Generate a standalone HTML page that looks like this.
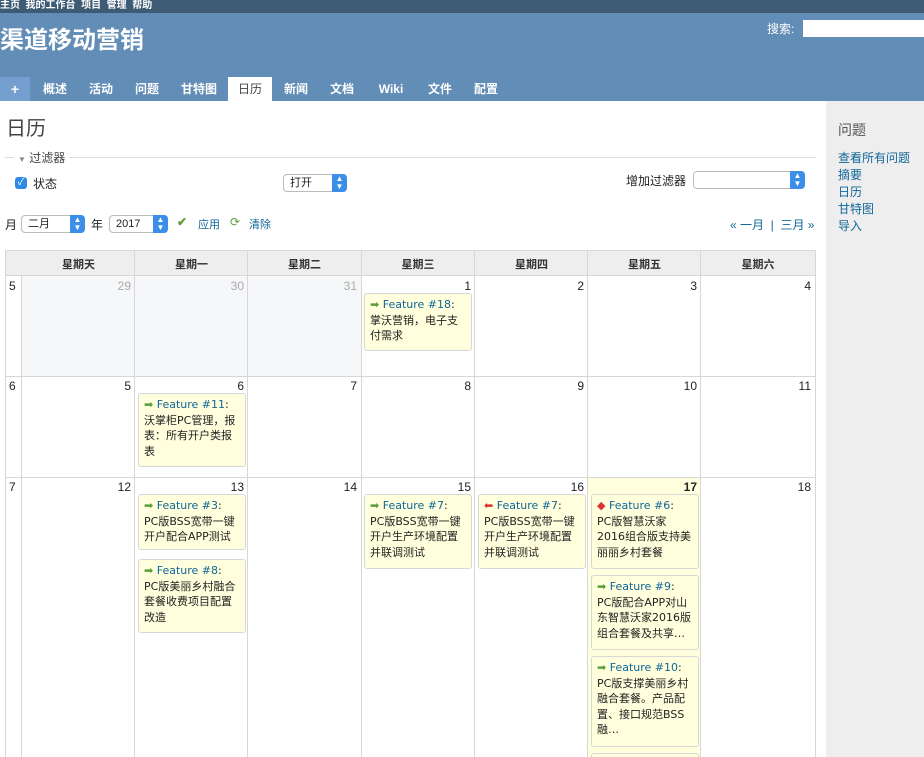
<!DOCTYPE html>
<html style="overflow:hidden;width:924px;height:757px"><head><meta charset="utf-8"><style>
*{margin:0;padding:0;box-sizing:border-box}
body{width:924px;height:757px;overflow:hidden;font-family:"Liberation Sans","Noto Sans CJK SC",sans-serif;font-size:12px;color:#222;background:#fff;position:relative}
.a{position:absolute}
#top{left:0;top:0;width:924px;height:13px;background:#3e5b76;color:#fff;font-size:10px;font-weight:bold;line-height:11px}
#hd{left:0;top:13px;width:924px;height:88px;background:#628db6}
.tab{top:77px;height:24px;line-height:24px;color:#fff;font-weight:bold;font-size:12px;text-align:center}
#side{left:826px;top:101px;width:98px;height:656px;background:#eeeeee}
.side a{display:block;color:#169;font-size:12px;line-height:17px;text-decoration:none}
.sel{height:18px;border:1px solid #bbb;border-radius:4px;background:#fff;font-size:11px;line-height:16px;padding-left:6px}
.sel i{position:absolute;right:-1px;top:-1px;width:15px;height:18px;background:#3b8fe8;border-radius:0 4px 4px 0;color:#fff;font-style:normal;font-size:8px;line-height:8px;text-align:center;padding-top:1px}
.dn{font-size:12px;text-align:right;padding-right:4px;line-height:18px}
.iss{background:#ffffdd;border:1px solid #d7d7d7;border-radius:3px;font-family:"DejaVu Sans","Noto Sans CJK SC",sans-serif;font-size:11px;line-height:15.5px;padding:3px 5px;width:108px;color:#222;overflow:hidden}
.iss b{font-weight:normal;color:#169}
.g{color:#5a9e3c}.r{color:#d33}
.wk{font-size:12px;left:9px}
</style></head><body>
<div id="top" class="a"><span>主页&nbsp; 我的工作台&nbsp; 项目&nbsp; 管理&nbsp; 帮助</span></div>
<div id="hd" class="a"></div>
<div class="a" style="left:0;top:20px;color:#fff;font-size:24px;font-weight:bold">渠道移动营销</div>
<div class="a" style="left:767px;top:20px;color:#fff;font-size:12px">搜索:</div>
<div class="a" style="left:803px;top:20px;width:121px;height:17px;background:#fff"></div>
<div class="a tab" style="left:0;width:30px;background:#759fcf;font-size:14px">+</div>
<div class="a tab" style="left:34px;width:42px">概述</div>
<div class="a tab" style="left:80px;width:42px">活动</div>
<div class="a tab" style="left:126px;width:42px">问题</div>
<div class="a tab" style="left:172px;width:54px">甘特图</div>
<div class="a tab" style="left:228px;width:44px;background:#fff;color:#444;font-weight:normal">日历</div>
<div class="a tab" style="left:275px;width:42px">新闻</div>
<div class="a tab" style="left:321px;width:42px">文档</div>
<div class="a tab" style="left:368px;width:46px">Wiki</div>
<div class="a tab" style="left:419px;width:42px">文件</div>
<div class="a tab" style="left:465px;width:42px">配置</div>
<div id="side" class="a"></div>
<div class="a" style="left:838px;top:120px;font-size:14px;color:#555">问题</div>
<div class="a side" style="left:838px;top:150px"><a>查看所有问题</a><a>摘要</a><a>日历</a><a>甘特图</a><a>导入</a></div>
<div class="a" style="left:6px;top:112px;font-size:20px;color:#444">日历</div>
<div class="a" style="left:5px;top:157px;width:811px;border-top:1px solid #ddd"></div>
<div class="a" style="left:14px;top:149px;background:#fff;padding:0 4px;font-size:12px;color:#444"><span style="font-size:8px;color:#888">▼</span> 过滤器</div>
<div class="a" style="left:15px;top:177px;width:12px;height:12px;background:#2d8ae6;border-radius:3px;color:#fff;font-size:10px;line-height:12px;text-align:center">✓</div>
<div class="a" style="left:33px;top:175px">状态</div>
<div class="a sel" style="left:283px;top:174px;width:64px">打开<i>▲<br>▼</i></div>
<div class="a" style="left:626px;top:172px">增加过滤器</div>
<div class="a sel" style="left:693px;top:171px;width:112px"><i>▲<br>▼</i></div>
<div class="a" style="left:5px;top:216px">月</div>
<div class="a sel" style="left:21px;top:215px;width:64px">二月<i>▲<br>▼</i></div>
<div class="a" style="left:91px;top:216px">年</div>
<div class="a sel" style="left:109px;top:215px;width:59px">2017<i>▲<br>▼</i></div>
<div class="a" style="left:177px;top:215px;color:#5a9e3c;font-weight:bold">✔</div>
<div class="a" style="left:198px;top:216px;color:#169;font-size:11px">应用</div>
<div class="a" style="left:230px;top:215px;color:#5a9e3c">⟳</div>
<div class="a" style="left:249px;top:216px;color:#169;font-size:11px">清除</div>
<div class="a" style="left:730px;top:216px;color:#169;font-size:12px">« 一月 &nbsp;|&nbsp; 三月 »</div>

<div class="a" style="left:5px;top:250px;width:811px;height:507px;border-left:1px solid #d7d7d7;border-top:1px solid #d7d7d7"></div>
<div class="a" style="left:6px;top:251px;width:809px;height:25px;background:#eee;border-bottom:1px solid #d7d7d7"></div>
<div class="a" style="left:22px;top:256px;width:793px;font-weight:bold;font-size:11px;display:flex;color:#333">
<div style="width:113px;text-align:center">星期天</div><div style="width:113px;text-align:center">星期一</div><div style="width:113px;text-align:center">星期二</div><div style="width:114px;text-align:center">星期三</div><div style="width:113px;text-align:center">星期四</div><div style="width:113px;text-align:center">星期五</div><div style="width:114px;text-align:center">星期六</div></div>
<div class="a wk" style="top:279px">5</div><div class="a wk" style="top:379px">6</div><div class="a wk" style="top:480px">7</div>
<div class="a" style="left:22px;top:276px;width:339px;height:100px;background:#f6f7f9"></div>
<div class="a" style="left:588px;top:477px;width:113px;height:280px;background:#ffffdd"></div>
<div class="a" style="left:21px;top:276px;height:481px;border-left:1px solid #d7d7d7"></div>
<div class="a" style="left:134px;top:251px;height:506px;border-left:1px solid #d7d7d7"></div>
<div class="a" style="left:247px;top:251px;height:506px;border-left:1px solid #d7d7d7"></div>
<div class="a" style="left:361px;top:251px;height:506px;border-left:1px solid #d7d7d7"></div>
<div class="a" style="left:474px;top:251px;height:506px;border-left:1px solid #d7d7d7"></div>
<div class="a" style="left:587px;top:251px;height:506px;border-left:1px solid #d7d7d7"></div>
<div class="a" style="left:700px;top:251px;height:506px;border-left:1px solid #d7d7d7"></div>
<div class="a" style="left:815px;top:251px;height:506px;border-left:1px solid #d7d7d7"></div>
<div class="a" style="left:6px;top:376px;width:809px;border-top:1px solid #d7d7d7"></div>
<div class="a" style="left:6px;top:477px;width:809px;border-top:1px solid #d7d7d7"></div>

<div class="a dn" style="left:22px;top:277px;width:113px;color:#aaa">29</div>
<div class="a dn" style="left:135px;top:277px;width:113px;color:#aaa">30</div>
<div class="a dn" style="left:248px;top:277px;width:113px;color:#aaa">31</div>
<div class="a dn" style="left:361px;top:277px;width:114px">1</div>
<div class="a dn" style="left:475px;top:277px;width:113px">2</div>
<div class="a dn" style="left:588px;top:277px;width:113px">3</div>
<div class="a dn" style="left:701px;top:277px;width:114px">4</div>
<div class="a dn" style="left:22px;top:377px;width:113px">5</div>
<div class="a dn" style="left:135px;top:377px;width:113px">6</div>
<div class="a dn" style="left:248px;top:377px;width:113px">7</div>
<div class="a dn" style="left:361px;top:377px;width:114px">8</div>
<div class="a dn" style="left:475px;top:377px;width:113px">9</div>
<div class="a dn" style="left:588px;top:377px;width:113px">10</div>
<div class="a dn" style="left:701px;top:377px;width:114px">11</div>
<div class="a dn" style="left:22px;top:478px;width:113px">12</div>
<div class="a dn" style="left:135px;top:478px;width:113px">13</div>
<div class="a dn" style="left:248px;top:478px;width:113px">14</div>
<div class="a dn" style="left:361px;top:478px;width:114px">15</div>
<div class="a dn" style="left:475px;top:478px;width:113px">16</div>
<div class="a dn" style="left:588px;top:478px;width:113px;font-weight:bold">17</div>
<div class="a dn" style="left:701px;top:478px;width:114px">18</div>

<div class="a iss" style="left:364px;top:293px;height:58px"><span class="g">➡</span> <b>Feature #18</b>:<br>掌沃营销，电子支付需求</div>
<div class="a iss" style="left:138px;top:393px;height:74px"><span class="g">➡</span> <b>Feature #11</b>:<br>沃掌柜PC管理，报表：所有开户类报表</div>
<div class="a iss" style="left:138px;top:494px;height:56px"><span class="g">➡</span> <b>Feature #3</b>:<br>PC版BSS宽带一键开户配合APP测试</div>
<div class="a iss" style="left:138px;top:559px;height:74px"><span class="g">➡</span> <b>Feature #8</b>:<br>PC版美丽乡村融合套餐收费项目配置改造</div>
<div class="a iss" style="left:364px;top:494px;height:75px"><span class="g">➡</span> <b>Feature #7</b>:<br>PC版BSS宽带一键开户生产环境配置并联调测试</div>
<div class="a iss" style="left:478px;top:494px;height:75px"><span class="r">⬅</span> <b>Feature #7</b>:<br>PC版BSS宽带一键开户生产环境配置并联调测试</div>
<div class="a iss" style="left:591px;top:494px;height:75px"><span class="r">◆</span> <b>Feature #6</b>:<br>PC版智慧沃家<br>2016组合版支持美丽丽乡村套餐</div>
<div class="a iss" style="left:591px;top:575px;height:75px"><span class="g">➡</span> <b>Feature #9</b>:<br>PC版配合APP对山东智慧沃家2016版组合套餐及共享…</div>
<div class="a iss" style="left:591px;top:656px;height:91px"><span class="g">➡</span> <b>Feature #10</b>:<br>PC版支撑美丽乡村融合套餐。产品配置、接口规范BSS融…</div>
<div class="a iss" style="left:591px;top:753px;height:4px;border-bottom:none"></div>
</body></html>
